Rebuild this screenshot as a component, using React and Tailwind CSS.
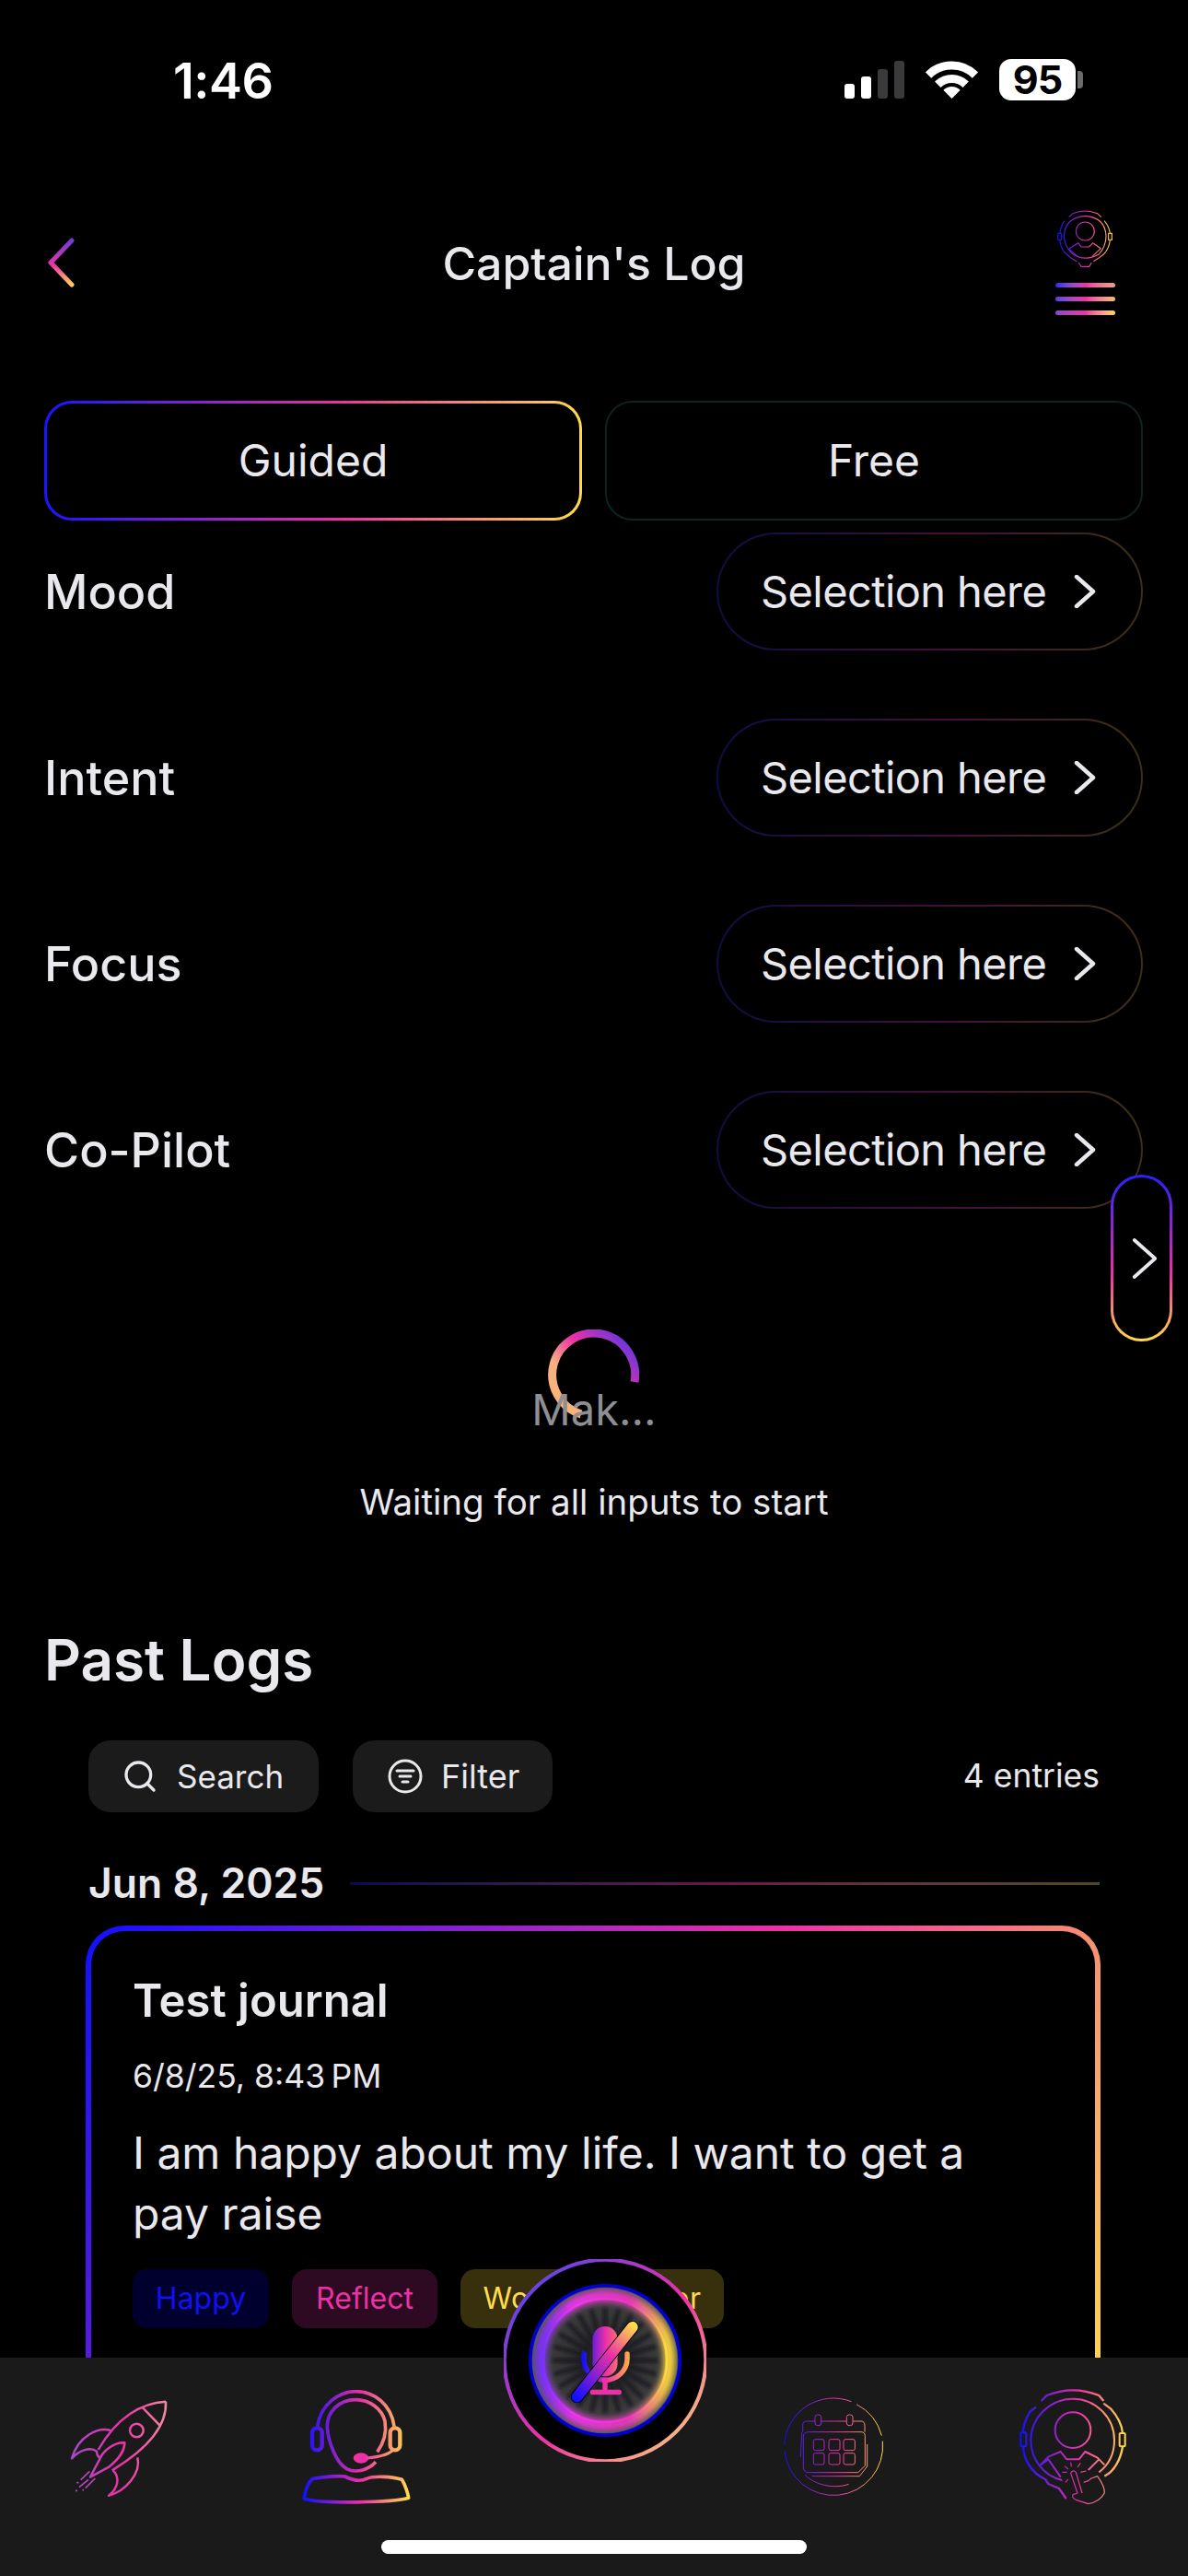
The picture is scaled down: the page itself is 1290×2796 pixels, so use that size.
import React from "react";
import { Search } from "lucide-react";

const ROWS = ["Mood", "Intent", "Focus", "Co-Pilot"];

// shared brand gradient, in the coordinates of the svg that uses it
const Grad = ({ id, x1, y1 = 0, x2, y2 = 0 }) => (
  <linearGradient id={id} gradientUnits="userSpaceOnUse" x1={x1} y1={y1} x2={x2} y2={y2}>
    <stop offset="0" stopColor="#1010ff" />
    <stop offset="0.55" stopColor="#ec31a6" />
    <stop offset="1" stopColor="#ffdc4a" />
  </linearGradient>
);

const Chevron = ({ className, width = 4 }) => (
  <svg className={className} viewBox="0 0 24 36" fill="none" stroke="currentColor" strokeWidth={width} strokeLinecap="round" strokeLinejoin="round">
    <path d="M3 2 L21 18 L3 34" />
  </svg>
);

const StatusBar = () => (
  <div className="flex h-[176px] items-start justify-between pl-[188px] pr-[114px] pt-[60px]">
    <span className="text-[54px] leading-[56px] font-semibold tracking-[-0.5px] text-white">1:46</span>
    <div className="flex items-start">
      <div className="mt-[6px] flex h-[41px] items-end gap-[7px]">
        <div className="h-[16px] w-[11px] rounded-[3px] bg-white" />
        <div className="h-[24px] w-[11px] rounded-[3px] bg-white" />
        <div className="h-[32px] w-[11px] rounded-[3px] bg-[#3a3a3c]" />
        <div className="h-[41px] w-[11px] rounded-[3px] bg-[#3a3a3c]" />
      </div>
      <svg className="ml-[23px] mt-[6px] h-[41px] w-[57px]" viewBox="0 0 57 41" fill="none" stroke="#fff" strokeWidth="9">
        <path d="M3 15.5 A36 36 0 0 1 54 15.5" />
        <path d="M13.3 25.8 A21.5 21.5 0 0 1 43.7 25.8" />
        <path d="M28.5 41 L19.3 31.8 A13 13 0 0 1 37.7 31.8 Z" fill="#fff" stroke="none" />
      </svg>
      <div className="ml-[23px] mt-[4px] flex h-[45px] w-[83px] items-center justify-center rounded-[13px] bg-white text-[43px] font-bold tracking-[-1px] text-black">95</div>
      <div className="ml-[2px] mt-[17px] h-[19px] w-[6px] rounded-r-[4px] bg-[#6b6b6b]" />
    </div>
  </div>
);

const ProfileIcon = () => (
  <svg className="h-[66px] w-[66px]" viewBox="285 135 198 198" fill="none" stroke="url(#top-profile)" strokeWidth="3.4">
    <defs><Grad id="top-profile" x1="295" x2="475" /></defs>
    <path d="M332 164 L345 152 Q385 136 425 152 L437 164 M318 176 Q306 190 303 216 M303 240 Q306 272 325 285 L340 298 L358 308 M412 308 L428 298 L445 285 Q462 268 466 240 M466 216 Q462 192 447 176" />
    <rect x="296" y="217" width="11" height="21" />
    <rect x="461" y="217" width="11" height="21" />
    <path d="M430 285 Q452 260 453 228 Q452 165 385 160 Q318 165 316 228 Q318 260 345 285 Q385 310 430 285" />
    <circle cx="385" cy="210" r="30" />
    <path d="M332 268 L362 248 L372 261 H398 L410 248 L436 266 M332 268 L360 292 M436 266 L408 292" />
    <path d="M364 312 L372 325 H398 L406 312" />
  </svg>
);

const Header = () => (
  <div className="grid h-[259px] grid-cols-[1fr_auto_1fr] items-start px-[52px] pt-[50px]">
    <svg className="mt-[32px] h-[54px] w-[30px]" viewBox="0 0 30 54" fill="none" stroke="url(#back)" strokeWidth="5" strokeLinecap="round" strokeLinejoin="round">
      <defs>
        <linearGradient id="back" x1="0" y1="0" x2="0" y2="1">
          <stop offset="0" stopColor="#6a3fd8" />
          <stop offset="0.55" stopColor="#ec31a6" />
          <stop offset="1" stopColor="#ffcf5a" />
        </linearGradient>
      </defs>
      <path d="M26 3 L3 27 L26 51" />
    </svg>
    <h1 className="mt-[30px] text-[50px] leading-[60px] font-medium text-[#e8e8ed]">Captain's Log</h1>
    <div className="mr-[27px] flex flex-col items-end">
      <ProfileIcon />
      <div className="mt-[15px] flex flex-col gap-[10px]">
        <div className="h-[5px] w-[65px] rounded-full bg-gradient-to-r from-[#2a22f0] via-[#ec31a6] to-[#eba27e]" />
        <div className="h-[5px] w-[65px] rounded-full bg-gradient-to-r from-[#5a3de0] via-[#ec31a6] to-[#f5bb70]" />
        <div className="h-[5px] w-[65px] rounded-full bg-gradient-to-r from-[#8a45c8] via-[#ec31a6] to-[#ffd65a]" />
      </div>
    </div>
  </div>
);

const Tabs = () => (
  <div className="flex gap-[25px] px-[48px]">
    <button className="h-[130px] w-[584px] rounded-[30px] border-[3px] border-transparent text-[48px] text-[#e8e8ed] [background:linear-gradient(#000,#000)_padding-box,linear-gradient(90deg,#1a14ff,#ec31a6_55%,#ffdc4a)_border-box]">
      Guided
    </button>
    <button className="h-[130px] w-[584px] rounded-[30px] border-2 border-[#0c2422] text-[48px] text-[#e8e8ed]">
      Free
    </button>
  </div>
);

const SelectRow = ({ label }) => (
  <div className="flex items-center justify-between">
    <span className="pt-[2px] text-[52px] font-[450] text-[#e8e8ed]">{label}</span>
    <button className="flex h-[128px] w-[463px] items-center rounded-full border-2 border-transparent pl-[46px] text-[47px] text-[#e8e8ed] [background:linear-gradient(#000,#000)_padding-box,linear-gradient(90deg,#0e0e40,#45103a_55%,#3a3014)_border-box]">
      <span className="tracking-[-0.6px]">Selection here</span>
      <Chevron className="ml-[30px] h-[36px] w-[24px]" width={4.5} />
    </button>
  </div>
);

const Spinner = () => (
  <svg className="h-[100px] w-[100px]" viewBox="0 0 100 100" fill="none" strokeWidth="9">
    <defs>
      <linearGradient id="spin" gradientUnits="userSpaceOnUse" x1="95" y1="10" x2="15" y2="85">
        <stop offset="0" stopColor="#5038e8" />
        <stop offset="0.45" stopColor="#ec31a6" />
        <stop offset="0.75" stopColor="#f5b080" />
        <stop offset="1" stopColor="#f9b478" />
      </linearGradient>
    </defs>
    <path d="M94 57 A45 45 0 1 0 36 92" stroke="url(#spin)" />
  </svg>
);

const Tag = ({ children, className }) => (
  <span className={`flex h-[64px] items-center justify-center rounded-[16px] text-[32px] ${className}`}>{children}</span>
);

const FilterIcon = () => (
  <svg className="h-[38px] w-[38px]" viewBox="0 0 38 38" fill="none" stroke="#e8e8ed" strokeWidth="3" strokeLinecap="round">
    <circle cx="19" cy="19" r="17" />
    <path d="M10 13 H28 M13 19 H25 M16 25 H22" />
  </svg>
);

const PastLogs = () => (
  <div>
    <h2 className="pl-[48px] text-[62px] leading-[76px] font-semibold text-[#e8e8ed]">Past Logs</h2>
    <div className="mt-[49px] flex items-center px-[96px]">
      <button className="flex h-[78px] w-[250px] items-center rounded-[24px] bg-[#1b1b1b] pl-[36px] text-[35px] text-[#e8e8ed]">
        <Search className="mr-[20px] h-[40px] w-[40px]" strokeWidth={2} />
        Search
      </button>
      <button className="ml-[37px] flex h-[78px] w-[217px] items-center rounded-[24px] bg-[#1b1b1b] pl-[38px] text-[36px] text-[#e8e8ed]">
        <FilterIcon />
        <span className="ml-[20px]">Filter</span>
      </button>
      <span className="ml-auto text-[35.5px] text-[#e8e8ed]">4 entries</span>
    </div>
    <div className="mt-[50px] flex items-center px-[96px]">
      <span className="text-[44.5px] leading-[54px] font-semibold text-[#e8e8ed]">Jun 8, 2025</span>
      <div className="ml-[28px] h-[3px] flex-1 bg-gradient-to-r from-[#0a0a50] via-[#6a1650] to-[#55481c]" />
    </div>
    <div className="ml-[93px] mt-[19px] h-[540px] w-[1102px] rounded-[42px] border-[6px] border-transparent pl-[45px] pt-[45px] [background:linear-gradient(#000,#000)_padding-box,linear-gradient(117deg,#1010ff,#ec31a6_55%,#ffdc4a)_border-box]">
      <h3 className="text-[49px] leading-[62px] font-semibold text-[#e8e8ed]">Test journal</h3>
      <p className="mt-[29px] text-[35.5px] leading-[44px] text-[#e8e8ed]">6/8/25, 8:43{"\u202F"}PM</p>
      <p className="mt-[28px] w-[980px] text-[48px] leading-[66px] text-[#e8e8ed]">I am happy about my life. I want to get a pay raise</p>
      <div className="mt-[27px] flex gap-[25px]">
        <Tag className="w-[148px] bg-[#00002e] text-[#1010f0]">Happy</Tag>
        <Tag className="w-[158px] bg-[#2e0a22] text-[#ec31a6]">Reflect</Tag>
        <Tag className="w-[286px] bg-[#38300c] tracking-[0.6px] text-[#ffdc4a]">Work &amp; Partner</Tag>
      </div>
    </div>
  </div>
);

const RocketIcon = () => (
  <svg className="h-[110px] w-[110px]" viewBox="105 130 330 330" fill="none" stroke="url(#rocket)" strokeWidth="7.5" strokeLinejoin="round">
    <defs>
      <linearGradient id="rocket" gradientUnits="userSpaceOnUse" x1="110" y1="300" x2="420" y2="300">
        <stop offset="0" stopColor="#a04cc8" />
        <stop offset="0.55" stopColor="#ec31a6" />
        <stop offset="1" stopColor="#f08aa0" />
      </linearGradient>
    </defs>
    <path d="M420 138 C340 142 260 190 200 295 M420 138 C424 205 380 280 245 362" />
    <path d="M345 158 L400 215" />
    <circle cx="325" cy="232" r="22" />
    <path d="M240 232 C200 220 135 250 114 323 C140 295 175 285 195 300 Q195 315 207 322" />
    <path d="M328 320 C340 370 290 430 234 444 C265 420 272 385 248 362" />
    <path d="M286 272 C250 270 215 300 205 325 L174 384 L236 350 C270 322 285 300 286 272 Z" />
    <path d="M143 393 L172 365 M138 417 L168 392 M158 420 L190 388 M130 402 L136 402 M126 428 L132 428 M148 426 L153 426" strokeWidth="5" />
  </svg>
);

const HeadsetIcon = () => (
  <svg className="h-[125px] w-[118px]" viewBox="865 103 354 375" fill="none" stroke="url(#headset)" strokeWidth="11" strokeLinejoin="round">
    <defs><Grad id="headset" x1="870" x2="1212" /></defs>
    <path d="M915 222 C925 150 985 108 1040 108 C1100 108 1155 150 1165 222" />
    <path d="M1110 305 C1135 270 1140 235 1135 205 C1125 165 1085 135 1040 135 C985 135 945 175 947 225 C950 270 975 340 1010 360 C1040 375 1080 365 1105 338" />
    <rect x="898" y="227" width="32" height="72" rx="16" strokeWidth="13" />
    <rect x="1152" y="227" width="32" height="72" rx="16" strokeWidth="13" />
    <ellipse cx="1057" cy="325" rx="25" ry="17" fill="#ec31a6" stroke="none" />
    <path d="M1075 325 C1110 322 1150 315 1165 295" strokeWidth="9" />
    <path d="M900 392 C940 385 990 382 1005 385 C1025 395 1050 405 1075 392 C1100 382 1160 385 1190 395 C1200 410 1210 440 1212 455 C1160 470 930 475 872 458 C872 440 885 400 900 392 Z" strokeWidth="11" />
  </svg>
);

const CalendarIcon = () => (
  <svg className="h-[110px] w-[110px]" viewBox="85 125 330 330" fill="none" stroke="url(#calendar)" strokeWidth="3">
    <defs><Grad id="calendar" x1="90" x2="410" /></defs>
    <path d="M308 139 A160 160 0 0 0 90 280 M91 300 A160 160 0 0 0 410 268 M407 250 A160 160 0 0 0 325 148" />
    <path d="M143 320 L147 240 L150 238 V215 Q150 203 165 203 H190 M211 203 H292 M314 203 H340 Q352 203 352 218 V238" />
    <rect x="190" y="182" width="20" height="35" rx="8" />
    <rect x="293" y="182" width="20" height="35" rx="8" />
    <path d="M170 238 H340 Q353 238 353 252 V348 L330 370 H170 Q152 370 152 352 V255 Q152 238 170 238 Z" />
    <path d="M360 278 V350 L335 382 H180" />
    <path d="M157 378 C190 410 250 425 300 408" />
    <rect x="185" y="262" width="35" height="36" rx="6" />
    <rect x="235" y="262" width="36" height="36" rx="6" />
    <rect x="283" y="262" width="37" height="36" rx="6" />
    <rect x="185" y="307" width="35" height="37" rx="6" />
    <rect x="235" y="307" width="36" height="37" rx="6" />
    <rect x="283" y="307" width="37" height="37" rx="6" />
  </svg>
);

const CrewIcon = () => (
  <svg className="h-[127px] w-[118px]" viewBox="848 98 354 381" fill="none" stroke="url(#crew)" strokeWidth="6" strokeLinejoin="round">
    <defs><Grad id="crew" x1="855" x2="1197" /></defs>
    <path d="M922 140 L940 122 Q1025 88 1110 122 L1125 140 M1125 148 L1148 165 C1170 190 1185 220 1187 245 M1187 290 C1180 330 1160 370 1128 385" strokeWidth="7" />
    <path d="M905 160 L885 175 C870 200 863 225 862 245 M863 290 C865 330 890 375 935 395 L945 410 L980 425 L1003 458" strokeWidth="7" />
    <rect x="855" y="243" width="18" height="45" rx="3" />
    <rect x="1177" y="245" width="18" height="43" rx="3" />
    <path d="M1110 372 C1145 345 1160 305 1160 268 C1160 195 1100 133 1025 133 C950 133 888 195 888 268 C888 330 930 385 990 398" />
    <circle cx="1025" cy="235" r="58" />
    <path d="M918 350 L945 322 L985 305 L1005 330 H1045 L1065 305 L1105 325 L1128 348 M918 350 L945 330 L985 388 M1075 365 L1110 330" />
    <path d="M1055 440 L1035 372 Q1025 362 1018 375 L1040 440 L1025 445 Q1020 455 1035 462 L1075 475 Q1110 470 1128 440 Q1130 420 1105 385 L1085 392 L1075 400 L1060 405" strokeWidth="3.5" />
    <path d="M1018 340 L1020 354 M1050 342 L1040 356 M998 352 L1010 362 M1068 368 L1050 372 M990 372 L1006 372 M1000 405 L1010 395" strokeWidth="3.5" />
  </svg>
);

const MicButton = () => (
  <svg className="absolute left-[547px] top-[-107px] h-[220px] w-[220px]" viewBox="145 100 650 650" fill="none">
    <defs>
      <linearGradient id="mic-ring" x1="0.1" y1="0.1" x2="0.9" y2="0.9">
        <stop offset="0" stopColor="#5a44e8" />
        <stop offset="0.55" stopColor="#ec31a6" />
        <stop offset="1" stopColor="#f8c080" />
      </linearGradient>
      <linearGradient id="mic-glow" gradientUnits="userSpaceOnUse" x1="270" y1="425" x2="670" y2="425">
        <stop offset="0" stopColor="#7a30ff" />
        <stop offset="0.25" stopColor="#f035f0" />
        <stop offset="0.7" stopColor="#f035c0" />
        <stop offset="1" stopColor="#ffdc3c" />
      </linearGradient>
      <linearGradient id="mic-glyph" gradientUnits="userSpaceOnUse" x1="375" y1="545" x2="565" y2="315">
        <stop offset="0" stopColor="#1010ff" />
        <stop offset="0.6" stopColor="#ec31a6" />
        <stop offset="1" stopColor="#ffdc4a" />
      </linearGradient>
      <linearGradient id="mic-body" gradientUnits="userSpaceOnUse" x1="400" y1="0" x2="545" y2="0">
        <stop offset="0" stopColor="#1010ff" />
        <stop offset="0.5" stopColor="#ec31a6" />
        <stop offset="1" stopColor="#ffa84a" />
      </linearGradient>
      <radialGradient id="mic-disc">
        <stop offset="0" stopColor="#1c1c1c" />
        <stop offset="0.7" stopColor="#3a3a3a" />
        <stop offset="1" stopColor="#5a5a50" />
      </radialGradient>
      <clipPath id="mic-clip"><circle cx="470" cy="425" r="232" /></clipPath>
      <filter id="mic-blur" filterUnits="userSpaceOnUse" x="145" y="100" width="650" height="650"><feGaussianBlur stdDeviation="11" /></filter>
      <filter id="mic-rays-blur" filterUnits="userSpaceOnUse" x="145" y="100" width="650" height="650"><feGaussianBlur stdDeviation="4" /></filter>
    </defs>
    <circle cx="470" cy="425" r="323" fill="#000" stroke="url(#mic-ring)" strokeWidth="12" />
    <circle cx="470" cy="425" r="240" fill="url(#mic-disc)" stroke="#0000d0" strokeWidth="11" />
    <g stroke="#161618" strokeOpacity="0.7" strokeWidth="13" filter="url(#mic-rays-blur)">
      {Array.from({ length: 24 }).map((_, i) => {
        const a = (i * Math.PI) / 12;
        return (
          <line
            key={i}
            x1={470 + 60 * Math.cos(a)}
            y1={425 + 60 * Math.sin(a)}
            x2={470 + 170 * Math.cos(a)}
            y2={425 + 170 * Math.sin(a)}
          />
        );
      })}
    </g>
    <g clipPath="url(#mic-clip)">
      <circle cx="470" cy="425" r="207" stroke="url(#mic-glow)" strokeWidth="34" filter="url(#mic-blur)" />
    </g>
    <circle cx="470" cy="425" r="198" stroke="url(#mic-glow)" strokeWidth="8" />
    <rect x="430" y="316" width="80" height="160" rx="40" fill="url(#mic-body)" />
    <path d="M402 404 V420 C402 460 435 488 470 488 C505 488 541 460 541 420 V404" stroke="url(#mic-body)" strokeWidth="16" strokeLinecap="round" />
    <path d="M470 488 V527 M430 527 H515" stroke="#ec31a6" strokeWidth="16" strokeLinecap="round" />
    <line x1="380" y1="542" x2="558" y2="318" stroke="#000" strokeWidth="40" strokeLinecap="round" />
    <line x1="380" y1="542" x2="558" y2="318" stroke="url(#mic-glyph)" strokeWidth="35" strokeLinecap="round" />
  </svg>
);

const BottomNav = () => (
  <div className="absolute inset-x-0 bottom-0 h-[237px] bg-[#1a1a1a]">
    <div className="flex items-start">
      <div className="ml-[75px] mt-[45px]"><RocketIcon /></div>
      <div className="ml-[143px] mt-[35px]"><HeadsetIcon /></div>
      <div className="ml-[404px] mt-[43px]"><CalendarIcon /></div>
      <div className="ml-[146px] mt-[33px]"><CrewIcon /></div>
    </div>
    <MicButton />
    <div className="absolute bottom-[24px] left-[414px] h-[15px] w-[462px] rounded-full bg-white" />
  </div>
);

export default function App() {
  return (
    <div className="relative h-[2796px] w-[1290px] overflow-hidden bg-black [font-family:Inter,sans-serif]">
      <StatusBar />
      <Header />
      <Tabs />
      <div className="mt-[13px] flex flex-col gap-[74px] pl-[48px] pr-[49px]">
        {ROWS.map((row) => (
          <SelectRow key={row} label={row} />
        ))}
      </div>
      <div className="mt-[131px] flex flex-col items-center">
        <Spinner />
        <span className="mt-[-42px] text-[47px] leading-[58px] text-[#8e8e93]">Mak...</span>
        <span className="mt-[48px] text-[38.5px] leading-[46px] text-[#e8e8ed]">Waiting for all inputs to start</span>
      </div>
      <div className="mt-[111px]">
        <PastLogs />
      </div>

      {/* side drawer handle */}
      <button className="absolute left-[1206px] top-[1275px] flex h-[181px] w-[67px] items-center justify-center rounded-full border-[3px] border-transparent pl-[6px] text-[#e8e8ed] [background:linear-gradient(#000,#000)_padding-box,linear-gradient(180deg,#2a20ff,#ec31a6_60%,#ffdc4a)_border-box]">
        <Chevron className="h-[48px] w-[30px]" width={3} />
      </button>

      <BottomNav />
    </div>
  );
}
